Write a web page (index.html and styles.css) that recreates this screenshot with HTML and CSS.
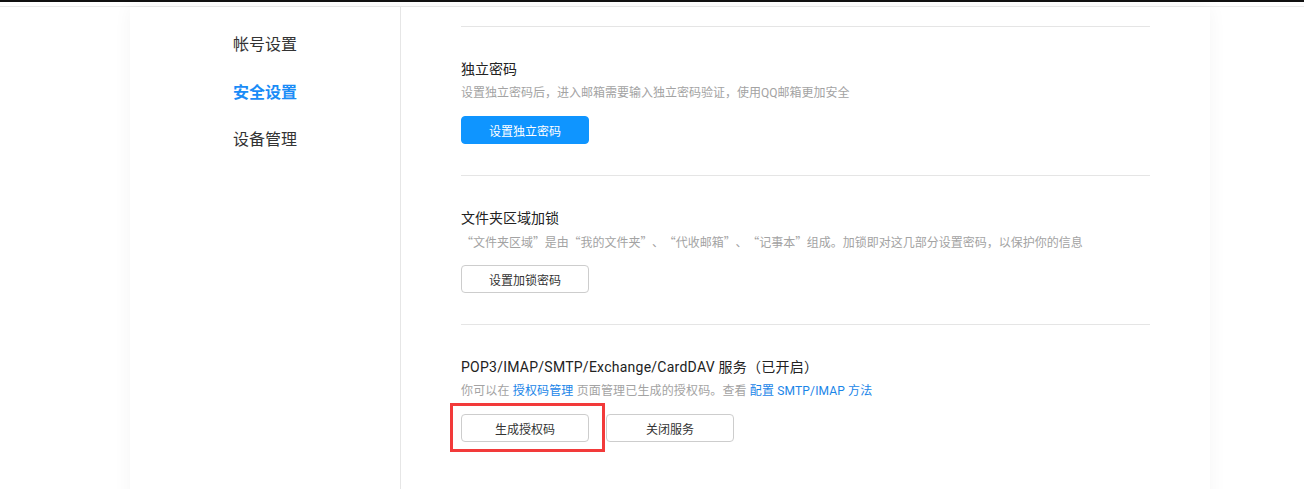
FILE: index.html
```html
<!DOCTYPE html>
<html lang="zh-CN">
<head>
    <meta charset="UTF-8">
    <meta name="viewport" content="width=device-width, initial-scale=1.0">
    <title>安全设置</title>
    <link rel="stylesheet" href="styles.css">
</head>
<body>
    <div class="topbar"></div>
    <div class="page">
        <div class="card">
            <div class="sidebar">
                <a class="nav-item">帐号设置</a>
                <a class="nav-item active">安全设置</a>
                <a class="nav-item">设备管理</a>
            </div>
            <div class="content">
                <div class="section">
                    <div class="section-title">独立密码</div>
                    <div class="section-desc">设置独立密码后，进入邮箱需要输入独立密码验证，使用QQ邮箱更加安全</div>
                    <div class="actions">
                        <button class="btn btn-primary">设置独立密码</button>
                    </div>
                </div>
                <div class="section">
                    <div class="section-title">文件夹区域加锁</div>
                    <div class="section-desc cjk">“文件夹区域” 是由 “我的文件夹” 、 “代收邮箱” 、 “记事本” 组成。加锁即对这几部分设置密码，以保护你的信息</div>
                    <div class="actions">
                        <button class="btn">设置加锁密码</button>
                    </div>
                </div>
                <div class="section">
                    <div class="section-title wide">POP3/IMAP/SMTP/Exchange/CardDAV 服务（已开启）</div>
                    <div class="section-desc wide">你可以在 <a class="link">授权码管理</a> 页面管理已生成的授权码。查看 <a class="link">配置 SMTP/IMAP 方法</a></div>
                    <div class="actions">
                        <span class="highlight-wrap">
                            <button class="btn">生成授权码</button>
                            <span class="highlight"></span>
                        </span>
                        <button class="btn btn-gap">关闭服务</button>
                    </div>
                </div>
            </div>
        </div>
    </div>
</body>
</html>
```
FILE: styles.css
```css
* {
    box-sizing: border-box;
}
body {
    margin: 0;
    background-color: #fff;
    font-family: Roboto, "Noto Sans CJK SC", sans-serif;
    color: #333;
    height: 489px;
    overflow: hidden;
}
.topbar {
    height: 2px;
    background-color: #111;
    margin-bottom: 4px;
}
.page {
    border-top: 1px solid #ebebeb;
}
.card {
    width: 1080px;
    margin-left: 130px;
    height: 500px;
    display: flex;
    background-color: #fff;
    box-shadow: 0 0 18px rgba(0, 0, 0, 0.045);
}
.sidebar {
    width: 271px;
    padding-top: 14px;
    padding-left: 103px;
    border-right: 1px solid #e6e6e6;
}
.nav-item {
    display: block;
    font-size: 16px;
    line-height: 47.5px;
    height: 47.5px;
    color: #333;
    cursor: pointer;
}
.nav-item.active {
    color: #1a8cf7;
    font-weight: bold;
}
.content {
    flex: 1;
    padding: 19px 60px 0 60px;
}
.section {
    border-top: 1px solid #e5e5e5;
    padding: 32px 0 31px 0;
}
.section-title {
    font-size: 14px;
    line-height: 20px;
    color: #222;
}
.section-desc {
    font-size: 12px;
    line-height: 18px;
    margin-top: 5px;
    color: #a3a3a3;
}
.section-desc.cjk {
    font-family: "Noto Sans CJK SC", sans-serif;
    word-spacing: -3px;
}
.section-title.wide {
    letter-spacing: 0.25px;
}
.section-desc.wide {
    letter-spacing: 0.15px;
}
.link {
    color: #1a85e8;
    cursor: pointer;
}
.actions {
    margin-top: 14px;
    display: flex;
}
.btn {
    width: 128px;
    height: 28px;
    font-family: inherit;
    font-size: 12px;
    color: #333;
    background-color: #fff;
    border: 1px solid #cdcdcd;
    border-radius: 4px;
    cursor: pointer;
    padding: 0;
}
.btn-primary {
    background-color: #0f95ff;
    border-color: #0f95ff;
    color: #fff;
}
.btn-gap {
    margin-left: 17px;
}
.highlight-wrap {
    position: relative;
    display: block;
}
.highlight {
    position: absolute;
    left: -11px;
    top: -11px;
    width: 155px;
    height: 49px;
    border: 3px solid #f23a3a;
}
```
